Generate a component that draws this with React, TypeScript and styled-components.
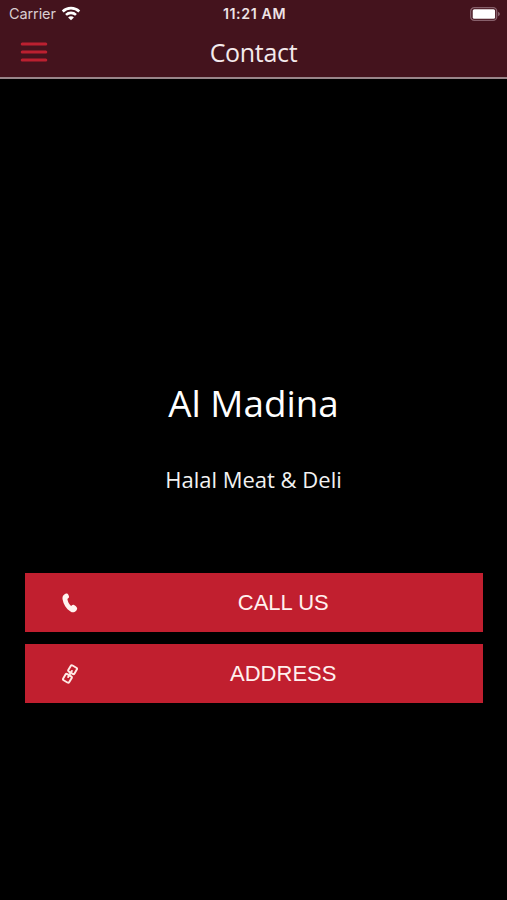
import React from "react";
import styled, { createGlobalStyle } from "styled-components";

const GlobalStyle = createGlobalStyle`
  * { box-sizing: border-box; }
  body { margin: 0; background: #000; }
`;

const Screen = styled.div`
  display: flex;
  flex-direction: column;
  width: 507px;
  height: 900px;
  background: #000;
  color: #fff;
  overflow: hidden;
  font-family: "Open Sans", "Noto Sans", sans-serif;
`;

const Header = styled.header`
  height: 79px;
  flex: none;
  background: #44131d;
  border-bottom: 2px solid #998589;
`;

const StatusBar = styled.div`
  display: grid;
  grid-template-columns: 1fr auto 1fr;
  align-items: center;
  height: 27px;
  padding: 0 7px 0 9px;
  font-family: Inter, sans-serif;
  font-size: 14.5px;
  line-height: 27px;
  color: #eee3e5;
`;

const Carrier = styled.div`
  display: flex;
  align-items: center;
  gap: 5px;
  letter-spacing: -0.1px;
  color: #d9cdd0;
`;

const Clock = styled.div`
  font-size: 14.2px;
  font-weight: 600;
  letter-spacing: 0.6px;
`;

const Battery = styled.div`
  display: flex;
  justify-content: flex-end;
`;

const NavBar = styled.nav`
  display: grid;
  grid-template-columns: 48px 1fr 48px;
  align-items: center;
  height: 50px;
`;

const MenuButton = styled.button`
  display: flex;
  padding: 0 0 0 20px;
  border: 0;
  background: none;
`;

const Title = styled.h1`
  margin: 0;
  text-align: center;
  font-size: 25px;
  font-weight: 400;
  line-height: 50px;
  letter-spacing: -0.3px;
  color: #f4eaec;
`;

const Content = styled.main`
  display: flex;
  flex-direction: column;
  padding: 299px 25px 0;
`;

const Name = styled.h2`
  margin: 0;
  text-align: center;
  font-size: 36.8px;
  font-weight: 400;
  line-height: 50px;
`;

const Tagline = styled.p`
  margin: 36px 0 78px;
  text-align: center;
  font-size: 22px;
  line-height: 31px;
  color: #f2f2f2;
`;

const Actions = styled.div`
  display: flex;
  flex-direction: column;
  gap: 12px;
  width: 457.5px;
`;

const Action = styled.button`
  display: grid;
  grid-template-columns: 89px 1fr 30px;
  align-items: center;
  height: 59px;
  padding: 1px 0 0;
  border: 0;
  background: #c11f2f;
  color: #fff0ee;
  font-family: "Liberation Sans", Arial, sans-serif;
  font-size: 22px;
  line-height: 58px;
`;

const ActionIcon = styled.span`
  display: flex;
  justify-content: center;
`;

const WifiIcon = () => (
  <svg width="20" height="15" viewBox="0 0 20 15" fill="none" stroke="#fff" strokeWidth="2.6">
    <path d="M1.7 5.5a12 12 0 0 1 16.6 0" />
    <path d="M5 8.9a7.2 7.2 0 0 1 10 0" />
    <path d="M10 14.2 7.1 11.4a4 4 0 0 1 5.8 0z" fill="#fff" stroke="none" />
  </svg>
);

const BatteryIcon = () => (
  <svg width="30" height="14" viewBox="0 0 30 14">
    <rect x="0.7" y="0.7" width="26" height="12.6" rx="3.6" fill="none" stroke="#87606b" strokeWidth="1.3" />
    <rect x="2.7" y="2.2" width="22.4" height="9.6" rx="1.6" fill="#fff" />
    <path d="M28.1 4.8c2.2.8 2.2 3.6 0 4.4z" fill="#92717a" />
  </svg>
);

const MenuIcon = () => (
  <svg width="28" height="22" viewBox="0 0 28 22" stroke="#bb2030" strokeWidth="3" strokeLinecap="round">
    <path d="M2.2 3h23.6M2.2 11h23.6M2.2 19h23.6" />
  </svg>
);

const PhoneIcon = () => (
  <svg width="16" height="20" viewBox="0 0 16 20" fill="#fff3ef">
    <path d="M1.5 2.3C2.6 1 3.9.4 4.9.5c1 .2 1.800 1.700 2.100 3.100.2 1-.4 1.700-1.600 2.300.4 2.900 1.700 5.200 3.700 7.100 1.200-1 2.100-1.400 2.900-1 1.200.6 2.800 2 3.100 2.900.4 1.300-.9 3.300-2.600 4.100-1.300.6-2.700.4-4-.5C4.200 15.700 1.400 11.500.6 6.500.3 4.600.6 3.300 1.500 2.300z" />
  </svg>
);

const LinkIcon = () => (
  <svg width="16" height="20" viewBox="0 0 18 22" fill="none" stroke="#ffe9e5" strokeWidth="2.2">
    <g transform="rotate(31 9 11)">
      <rect x="5" y="1.3" width="8" height="8" rx="1.5" />
      <rect x="5" y="12.7" width="8" height="8" rx="1.5" />
      <path d="M9 7v8" strokeWidth="2.2" strokeLinecap="round" />
    </g>
  </svg>
);

export default function App() {
  return (
    <>
      <GlobalStyle />
      <Screen>
        <Header>
          <StatusBar>
            <Carrier>
              Carrier
              <WifiIcon />
            </Carrier>
            <Clock>11:21 AM</Clock>
            <Battery>
              <BatteryIcon />
            </Battery>
          </StatusBar>
          <NavBar>
            <MenuButton aria-label="Menu">
              <MenuIcon />
            </MenuButton>
            <Title>Contact</Title>
          </NavBar>
        </Header>
        <Content>
          <Name>Al Madina</Name>
          <Tagline>Halal Meat &amp; Deli</Tagline>
          <Actions>
            <Action>
              <ActionIcon>
                <PhoneIcon />
              </ActionIcon>
              <span>CALL US</span>
            </Action>
            <Action>
              <ActionIcon>
                <LinkIcon />
              </ActionIcon>
              <span>ADDRESS</span>
            </Action>
          </Actions>
        </Content>
      </Screen>
    </>
  );
}
